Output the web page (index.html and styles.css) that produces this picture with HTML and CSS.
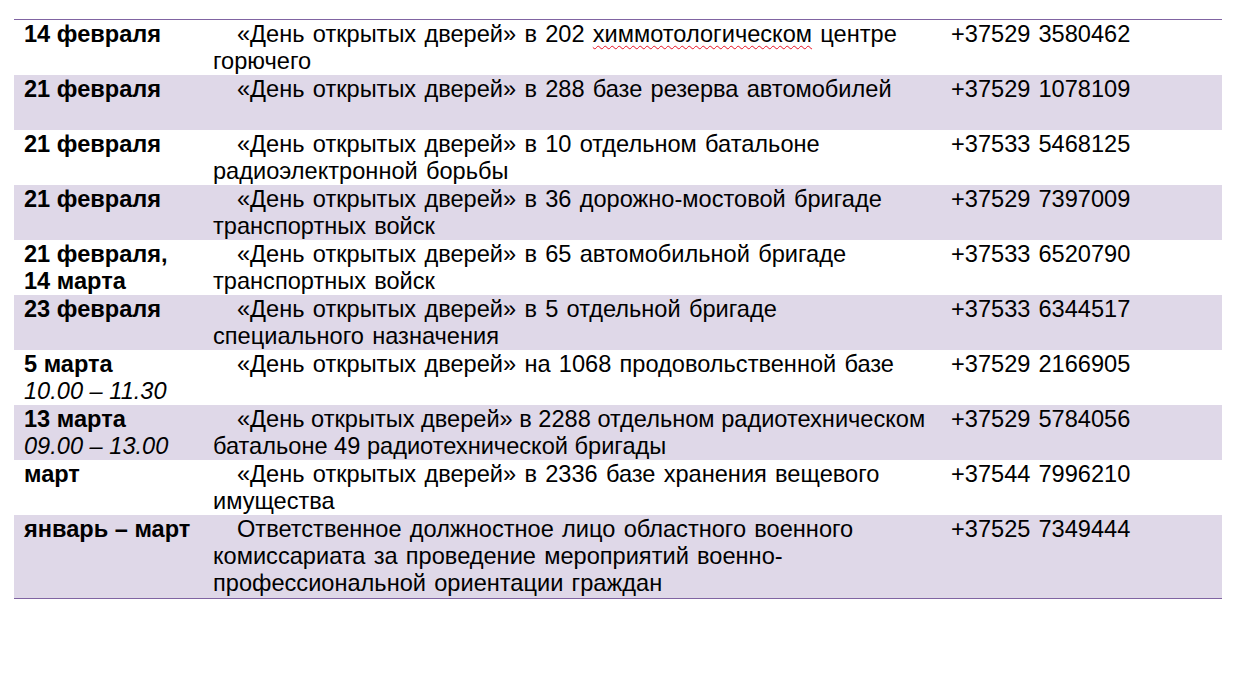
FILE: index.html
```html
<!DOCTYPE html>
<html lang="ru">
<head>
<meta charset="utf-8">
<link rel="stylesheet" href="styles.css">
</head>
<body>
<div class="page">
  <div class="table-wrap">
    <table class="events">
      <colgroup>
        <col class="c-date">
        <col class="c-desc">
        <col class="c-phone">
      </colgroup>
      <tbody>
        <tr>
          <td class="date"><b>14 февраля</b></td>
          <td class="desc"><span class="ind">«День открытых дверей» в 202 <span class="spell">химмотологическом</span> центре</span><br>горючего</td>
          <td class="phone">+37529 3580462</td>
        </tr>
        <tr class="shade">
          <td class="date"><b>21 февраля</b></td>
          <td class="desc"><span class="ind">«День открытых дверей» в 288 базе резерва автомобилей</span></td>
          <td class="phone">+37529 1078109</td>
        </tr>
        <tr>
          <td class="date"><b>21 февраля</b></td>
          <td class="desc"><span class="ind">«День открытых дверей» в 10 отдельном батальоне</span><br>радиоэлектронной борьбы</td>
          <td class="phone">+37533 5468125</td>
        </tr>
        <tr class="shade">
          <td class="date"><b>21 февраля</b></td>
          <td class="desc"><span class="ind">«День открытых дверей» в 36 дорожно-мостовой бригаде</span><br>транспортных войск</td>
          <td class="phone">+37529 7397009</td>
        </tr>
        <tr>
          <td class="date"><b>21 февраля,<br>14 марта</b></td>
          <td class="desc"><span class="ind">«День открытых дверей» в 65 автомобильной бригаде</span><br>транспортных войск</td>
          <td class="phone">+37533 6520790</td>
        </tr>
        <tr class="shade">
          <td class="date"><b>23 февраля</b></td>
          <td class="desc"><span class="ind">«День открытых дверей» в 5 отдельной бригаде</span><br>специального назначения</td>
          <td class="phone">+37533 6344517</td>
        </tr>
        <tr>
          <td class="date"><b>5 марта</b><br><i>10.00 – 11.30</i></td>
          <td class="desc"><span class="ind">«День открытых дверей» на 1068 продовольственной базе</span></td>
          <td class="phone">+37529 2166905</td>
        </tr>
        <tr class="shade">
          <td class="date"><b>13 марта</b><br><i>09.00 – 13.00</i></td>
          <td class="desc tight"><span class="ind">«День открытых дверей» в 2288 отдельном радиотехническом</span><br>батальоне 49 радиотехнической бригады</td>
          <td class="phone">+37529 5784056</td>
        </tr>
        <tr>
          <td class="date"><b>март</b></td>
          <td class="desc"><span class="ind">«День открытых дверей» в 2336 базе хранения вещевого</span><br>имущества</td>
          <td class="phone">+37544 7996210</td>
        </tr>
        <tr class="shade last">
          <td class="date"><b>январь – март</b></td>
          <td class="desc"><span class="ind">Ответственное должностное лицо областного военного</span><br>комиссариата за проведение мероприятий военно-<br>профессиональной ориентации граждан</td>
          <td class="phone">+37525 7349444</td>
        </tr>
      </tbody>
    </table>
    <span class="handle"></span>
  </div>
</div>
</body>
</html>
```

FILE: styles.css
```css
html, body {
  margin: 0;
  padding: 0;
  background: #ffffff;
}

body {
  font-family: "Liberation Sans", Arial, sans-serif;
  color: #000000;
}

.page {
  padding: 19px 0 0 14px;
}

.table-wrap {
  position: relative;
  width: 1208px;
}

.events {
  width: 1208px;
  border-collapse: collapse;
  table-layout: fixed;
  border-top: 1px solid #8064a2;
  border-bottom: 1px solid #8064a2;
  font-size: 23.6px;
  line-height: 27px;
}

.c-date { width: 189px; }
.c-desc { width: 738px; }
.c-phone { width: 281px; }

.events tr {
  height: 55px;
}

.events tr.last {
  height: 83px;
}

.events td {
  vertical-align: top;
  padding: 1px 10px 0;
  white-space: nowrap;
}

.shade td {
  background: #dfd8e8;
}

.date b {
  font-weight: bold;
}

.date i {
  font-style: italic;
}

.desc {
  word-spacing: 1.7px;
}

.desc.tight {
  word-spacing: 0;
}

.ind {
  padding-left: 24px;
}

.spell {
  text-decoration: underline wavy #e81123;
  text-decoration-thickness: 1px;
  text-underline-offset: 3px;
}

.phone {
  word-spacing: 1.5px;
}

.handle {
  position: absolute;
  left: 1208px;
  top: 100%;
  margin-top: 2px;
  width: 4px;
  height: 4px;
  border: 1px solid #7f7f7f;
  background: #ffffff;
}
```
